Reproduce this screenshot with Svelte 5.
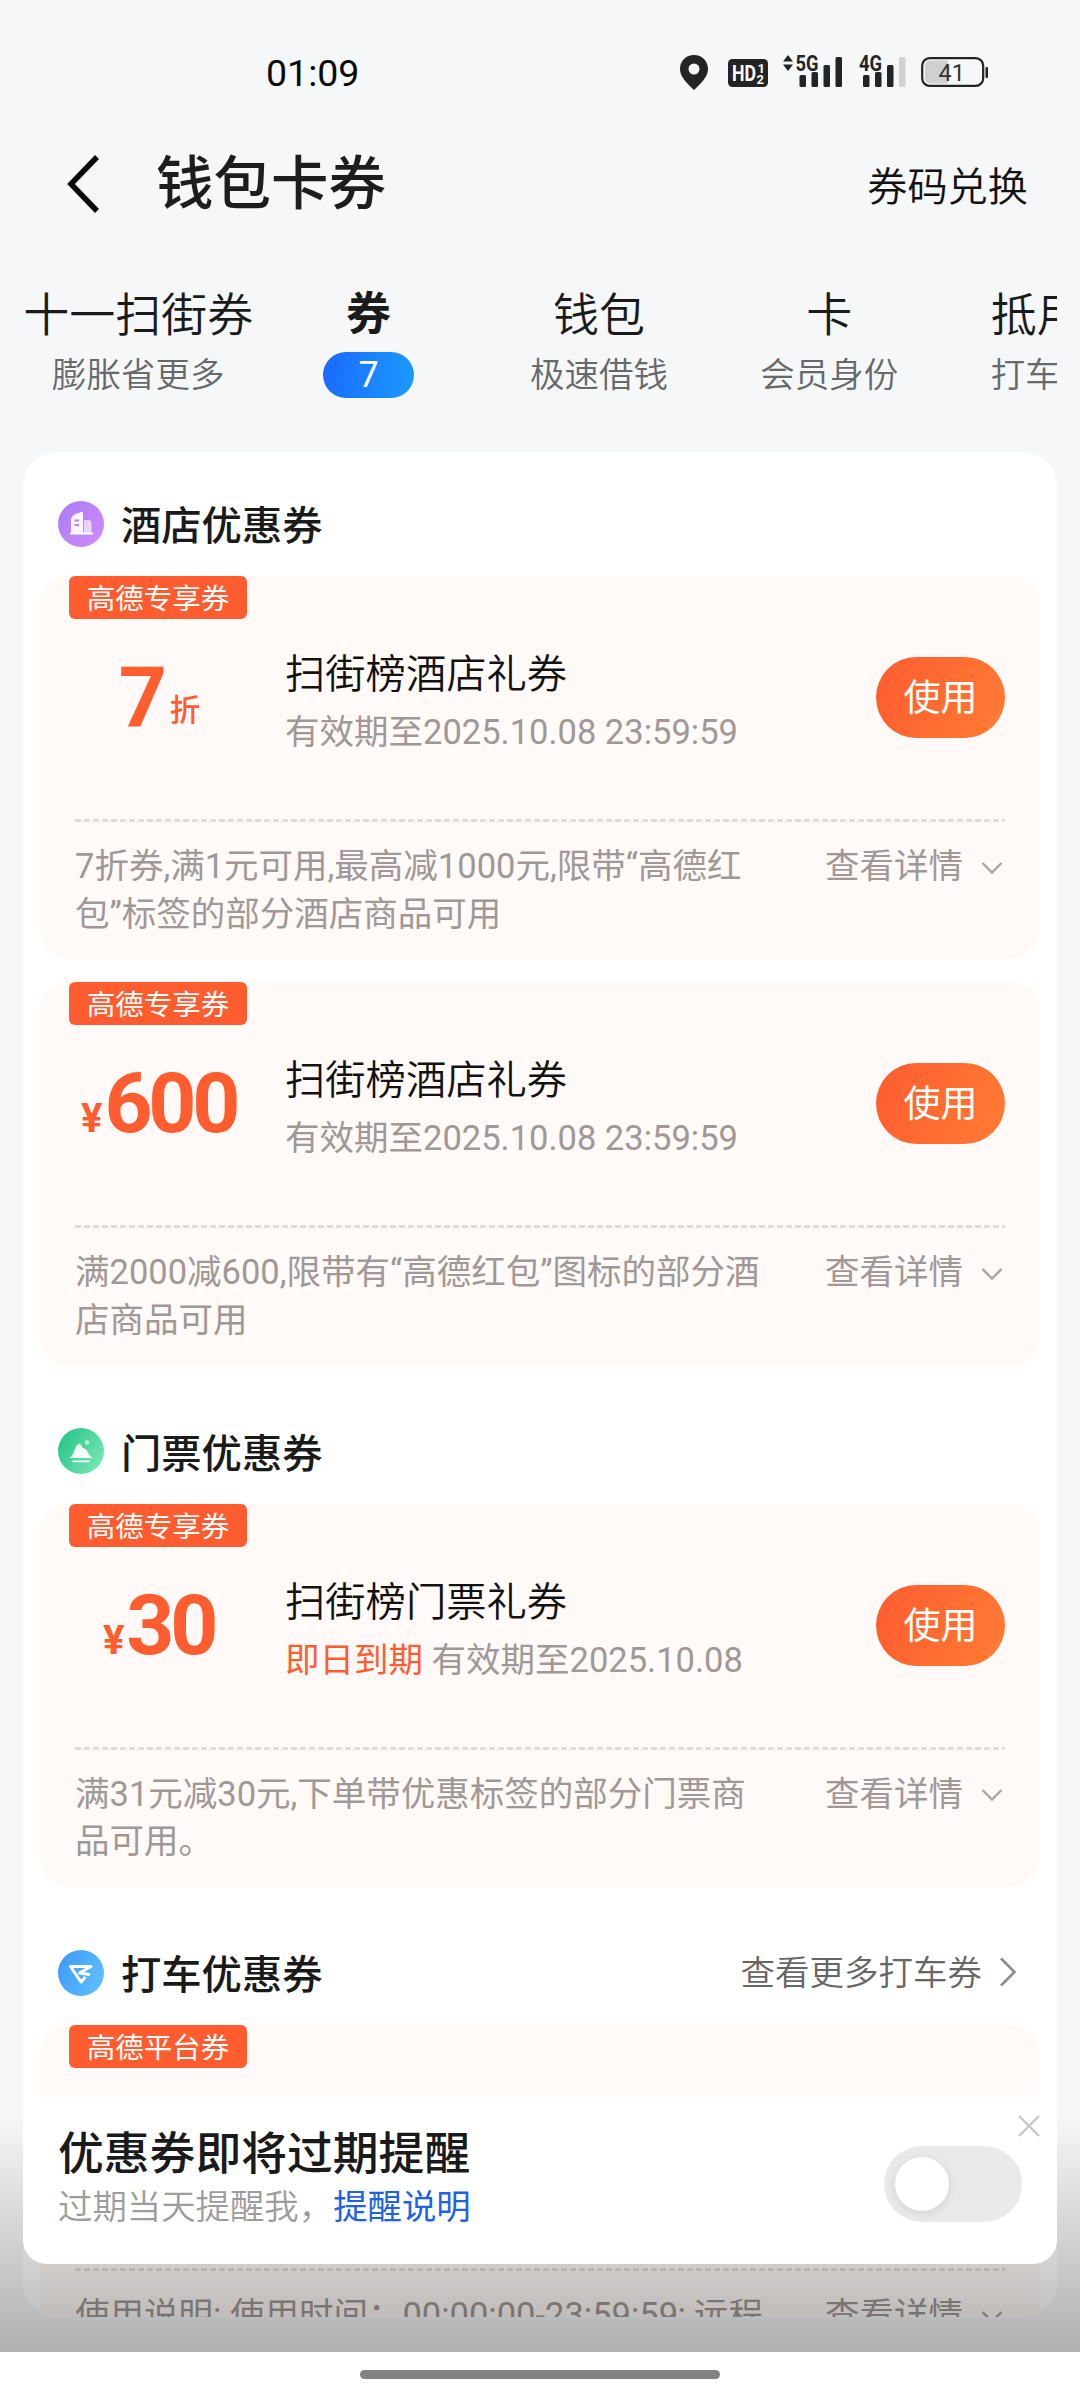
<script>
    const tabs = [
        { label: '十一扫街券', sub: '膨胀省更多' },
        { label: '券', count: 7 },
        { label: '钱包', sub: '极速借钱' },
        { label: '卡', sub: '会员身份' },
        { label: '抵用券', sub: '打车可用' }
    ];
    let active = $state(1);
    let remind = $state(false);

    const sections = [
        {
            icon: 'hotel',
            title: '酒店优惠券',
            coupons: [
                {
                    tag: '高德专享券',
                    amount: '7',
                    unit: '折',
                    name: '扫街榜酒店礼券',
                    valid: '有效期至2025.10.08 23:59:59',
                    desc: ['7折券,满1元可用,最高减1000元,限带“高德红', '包”标签的部分酒店商品可用']
                },
                {
                    tag: '高德专享券',
                    prefix: '¥',
                    amount: '600',
                    name: '扫街榜酒店礼券',
                    valid: '有效期至2025.10.08 23:59:59',
                    desc: ['满2000减600,限带有“高德红包”图标的部分酒', '店商品可用']
                }
            ]
        },
        {
            icon: 'ticket',
            title: '门票优惠券',
            coupons: [
                {
                    tag: '高德专享券',
                    prefix: '¥',
                    amount: '30',
                    name: '扫街榜门票礼券',
                    urgent: '即日到期',
                    valid: '有效期至2025.10.08',
                    desc: ['满31元减30元,下单带优惠标签的部分门票商', '品可用。']
                }
            ]
        },
        {
            icon: 'taxi',
            title: '打车优惠券',
            more: '查看更多打车券',
            coupons: [
                {
                    tag: '高德平台券',
                    desc: ['使用说明: 使用时间：00:00:00-23:59:59; 远程']
                }
            ]
        }
    ];
</script>

<div class="screen">
    <div class="status-bar">
        <span class="clock">01:09</span>
        <div class="status-icons">
            <svg class="pin" width="28" height="35" viewBox="0 0 28 35">
                <path fill-rule="evenodd" fill="#222425" d="M14 0C6 0 0 6 0 14c0 8 7 14 14 21 7-7 14-13 14-21C28 6 22 0 14 0zm0 8.500a5.500 5.500 0 1 1 0 11 5.500 5.500 0 0 1 0-11z" />
            </svg>
            <svg class="hd" width="40" height="28" viewBox="0 0 40 28">
                <rect width="40" height="28" rx="4.500" fill="#222425" />
                <text x="4" y="22" font-size="22" font-weight="700" textLength="24" lengthAdjust="spacingAndGlyphs">HD</text>
                <text x="29.500" y="13.500" font-size="13" font-weight="700">1</text>
                <text x="28.500" y="25" font-size="13" font-weight="700">2</text>
            </svg>
            <svg class="signal" width="60" height="33" viewBox="0 0 60 33" fill="#222425">
                <path d="M0 6.500 5 0l5 6.500zM0 9.500h10L5 16z" />
                <text x="12.500" y="15.500" font-size="21.500" font-weight="700" textLength="23" lengthAdjust="spacingAndGlyphs">5G</text>
                <rect x="16.500" y="20" width="6.500" height="12" rx="1.500" />
                <rect x="28.500" y="17" width="6.500" height="15" rx="1.500" />
                <rect x="40.500" y="10" width="6.500" height="22" rx="1.500" />
                <rect x="52.500" y="2" width="6.500" height="30" rx="1.500" />
            </svg>
            <svg class="signal second" width="47" height="33" viewBox="0 0 47 33" fill="#222425">
                <text x="0" y="15.500" font-size="21.500" font-weight="700" textLength="23" lengthAdjust="spacingAndGlyphs">4G</text>
                <rect x="4" y="20" width="6.500" height="12" rx="1.500" />
                <rect x="16" y="17" width="6.500" height="15" rx="1.500" />
                <rect x="28" y="10" width="6.500" height="22" rx="1.500" />
                <rect x="40" y="2" width="6.500" height="30" rx="1.500" fill="#cfd1d2" />
            </svg>
            <svg class="battery" width="67" height="30" viewBox="0 0 67 30">
                <path d="M9 3.500h18v23H9a5 5 0 0 1-5-5v-13a5 5 0 0 1 5-5z" fill="#cfd0d1" />
                <rect x="1.200" y="1.200" width="61" height="27.600" rx="7.500" fill="none" stroke="#222425" stroke-width="2.200" />
                <rect x="64.500" y="10" width="2.500" height="11" rx="1" fill="#222425" />
                <text class="level" x="17.500" y="24" font-size="23.500">41</text>
            </svg>
        </div>
    </div>

    <header class="nav">
        <svg class="back" width="34" height="60" viewBox="0 0 34 60" fill="none">
            <path d="M31 3 5 30l26 27" stroke="#0a0a0a" stroke-width="5.500" />
        </svg>
        <h1>钱包卡券</h1>
        <span class="redeem">券码兑换</span>
    </header>

    <nav class="tabs">
        {#each tabs as tab, i}
            <button class="tab" class:active={i === active} onclick={() => (active = i)}>
                <span class="tab-label">{tab.label}</span>
                {#if tab.count}
                    <span class="tab-count">{tab.count}</span>
                {:else}
                    <span class="tab-sub">{tab.sub}</span>
                {/if}
            </button>
        {/each}
    </nav>

    <main class="panel">
        {#each sections as section}
            <section>
                <div class="section-head">
                    {#if section.icon === 'hotel'}
                        <svg width="46" height="46" viewBox="0 0 46 46">
                            <defs>
                                <linearGradient id="g-hotel" x1="0" y1="0" x2="1" y2="1">
                                    <stop offset="0" stop-color="#a97bf5" />
                                    <stop offset="1" stop-color="#cf8dfb" />
                                </linearGradient>
                            </defs>
                            <circle cx="23" cy="23" r="23" fill="url(#g-hotel)" />
                            <path d="M26 19h4.500a3 3 0 0 1 3 3v10H26z" fill="#fff" opacity=".65" />
                            <path d="M13 32V19c0-4 5-7.500 12-8V32z" fill="#fff" opacity=".92" />
                            <path d="M16.500 19.500h4.500M16.500 24h4.500" stroke="#b682f7" stroke-width="1.800" />
                            <path d="M12 32.500h23" stroke="#fff" stroke-width="2" />
                        </svg>
                    {:else if section.icon === 'ticket'}
                        <svg width="46" height="46" viewBox="0 0 46 46">
                            <defs>
                                <linearGradient id="g-ticket" x1="0" y1="0" x2="1" y2="0.600">
                                    <stop offset="0" stop-color="#1fc184" />
                                    <stop offset="1" stop-color="#72e5b0" />
                                </linearGradient>
                            </defs>
                            <circle cx="23" cy="23" r="23" fill="url(#g-ticket)" />
                            <path d="M11 30c3-1 4.500-4.500 6-9 1-3 2-5 4-5s2.500 2 4 4l2 1c3 1 3.500 7.500 8 9z" fill="#fff" opacity=".92" />
                            <circle cx="29" cy="14.500" r="2.200" fill="#fff" opacity=".7" />
                            <path d="M15 33.300h16" stroke="#fff" stroke-width="1.800" stroke-linecap="round" />
                        </svg>
                    {:else}
                        <svg width="46" height="46" viewBox="0 0 46 46">
                            <defs>
                                <linearGradient id="g-taxi" x1="0" y1="0" x2="1" y2="0.500">
                                    <stop offset="0" stop-color="#3b97fa" />
                                    <stop offset="1" stop-color="#5cbcff" />
                                </linearGradient>
                            </defs>
                            <circle cx="23" cy="23" r="23" fill="url(#g-taxi)" />
                            <path d="m27.500 27-4.500 5-10.500-15.500H33L21.500 23l10.500 1.500" fill="none" stroke="#fff" stroke-width="3" stroke-linejoin="round" />
                        </svg>
                    {/if}
                    <h2>{section.title}</h2>
                    {#if section.more}
                        <span class="more">
                            {section.more}
                            <svg width="18" height="30" viewBox="0 0 18 30" fill="none">
                                <path d="m2 1.500 13.500 13.500L2 28.500" stroke="#8c8c8c" stroke-width="2.600" />
                            </svg>
                        </span>
                    {/if}
                </div>

                <div class="coupons">
                    {#each section.coupons as c}
                        <article class="coupon">
                            <span class="tag">{c.tag}</span>
                            <div class="coupon-main">
                                {#if c.name}
                                    <div class="amount">
                                        {#if c.prefix}<span class="prefix">{c.prefix}</span>{/if}
                                        <span class="value">{c.amount}</span>
                                        {#if c.unit}<span class="unit">{c.unit}</span>{/if}
                                    </div>
                                    <div class="info">
                                        <h3>{c.name}</h3>
                                        <p class="valid">
                                            {#if c.urgent}<span class="urgent">{c.urgent}</span>{/if}
                                            {c.valid}
                                        </p>
                                    </div>
                                    <button class="use">使用</button>
                                {/if}
                            </div>
                            <div class="dashes"></div>
                            <div class="coupon-foot">
                                <p class="desc">
                                    {#each c.desc as line}
                                        <span>{line}</span>
                                    {/each}
                                </p>
                                <span class="detail">
                                    查看详情
                                    <svg width="22" height="14" viewBox="0 0 22 14" fill="none">
                                        <path d="m1.500 2 9.500 9.500L20.500 2" stroke="#aaa4a3" stroke-width="2.400" />
                                    </svg>
                                </span>
                            </div>
                        </article>
                    {/each}
                </div>
            </section>
        {/each}
    </main>

    <!-- floating expiry reminder -->
    <div class="shade"></div>
    <div class="reminder">
        <div class="reminder-text">
            <h4>优惠券即将过期提醒</h4>
            <p>过期当天提醒我，<span class="link">提醒说明</span></p>
        </div>
        <button class="toggle" class:on={remind} aria-label="提醒" onclick={() => (remind = !remind)}>
            <span class="knob"></span>
        </button>
        <svg class="close" width="24" height="24" viewBox="0 0 24 24">
            <path d="m2 2 20 20M22 2 2 22" stroke="#c8c8c8" stroke-width="2.400" />
        </svg>
    </div>

    <div class="home-bar"><span></span></div>
</div>

<style>
    :global(body) {
        margin: 0;
        background: #f5f7f9;
    }

    .screen {
        position: relative;
        width: 1080px;
        height: 2400px;
        overflow: hidden;
        background: #f5f7f9;
        font-family: Roboto, 'Noto Sans CJK SC', sans-serif;
        color: #1a1a1a;
    }

    h1, h2, h3, h4, p {
        margin: 0;
        font-weight: 400;
    }

    button {
        border: 0;
        padding: 0;
        background: none;
        font-family: inherit;
        color: inherit;
    }

    svg {
        display: block;
        flex-shrink: 0;
        overflow: visible;
    }

    /* status bar */
    .status-bar {
        display: flex;
        justify-content: space-between;
        height: 130px;
        padding: 55px 92px 0 266px;
        box-sizing: border-box;
    }

    .clock {
        margin-top: -4px;
        font-size: 37.500px;
        font-weight: 450;
        line-height: 44px;
        color: #0a0a0a;
    }

    .status-icons {
        display: flex;
        align-items: flex-start;
    }

    .hd {
        margin: 4px 15px 0 20px;
        fill: #fff;
    }

    .second {
        margin: 0 15px 0 16px;
    }

    .battery {
        margin-top: 2px;
    }

    .level {
        fill: #333;
    }

    /* nav */
    .nav {
        display: flex;
        align-items: center;
        height: 108px;
        padding: 0 52px 0 66px;
    }

    .nav h1 {
        margin: 2px 0 0 56px;
        font-size: 57.500px;
        font-weight: 500;
        line-height: 80px;
        color: #1c1d1f;
    }

    .redeem {
        margin: 7px 0 0 auto;
        font-size: 40.200px;
        line-height: 60px;
        color: #111;
        font-weight: 350;
    }

    /* tabs */
    .tabs {
        display: flex;
        height: 176px;
        margin: 38px 23px 0;
        overflow: hidden;
    }

    .tab {
        display: flex;
        flex: 0 0 230.400px;
        flex-direction: column;
        align-items: center;
        white-space: nowrap;
    }

    .tab-label {
        margin-top: 9px;
        font-size: 46px;
        font-weight: 350;
        line-height: 60px;
    }

    .tab.active .tab-label {
        font-weight: 700;
        font-size: 45px;
    }

    .tab-sub {
        margin-top: 7px;
        font-size: 34.500px;
        font-weight: 350;
        line-height: 46px;
        color: #66686a;
    }

    .tab-count {
        width: 91px;
        margin-top: 7px;
        border-radius: 23px;
        background: linear-gradient(100deg, #1b68ff, #1a9bff);
        font-size: 36px;
        line-height: 46px;
        text-align: center;
        color: #fff;
    }

    /* coupon list */
    .panel {
        height: 1865px;
        margin: 0 23px;
        overflow: hidden;
        border-radius: 34px;
        background: #fff;
        box-sizing: border-box;
    }

    .section-head {
        display: flex;
        align-items: center;
        height: 76px;
        padding: 62px 40px 0 35px;
    }

    section:first-child .section-head {
        padding-top: 48px;
    }

    .section-head svg {
        margin-top: -29px;
    }

    .section-head h2 {
        margin: -22px 0 0 17px;
        font-size: 40.300px;
        font-weight: 500;
        line-height: 60px;
    }

    .more {
        display: flex;
        align-items: center;
        margin: -28px 0 0 auto;
        font-size: 34.500px;
        font-weight: 350;
        line-height: 50px;
        color: #666;
    }

    .more svg {
        margin: -2px 0 0 17px;
    }

    .coupons {
        display: flex;
        flex-direction: column;
        gap: 23px;
        padding: 0 17px;
    }

    .coupon {
        height: 383.400px;
        border-radius: 28px;
        background: #fff9f7;
    }

    .tag {
        display: block;
        width: 178px;
        height: 43px;
        margin-left: 29px;
        border-radius: 6px;
        background: #ff5c30;
        font-size: 28.500px;
        line-height: 47px;
        text-align: center;
        color: #fff;
    }

    .coupon-main {
        display: flex;
        height: 200px;
        padding-right: 35px;
    }

    .amount {
        display: flex;
        align-items: baseline;
        justify-content: center;
        width: 237px;
        height: 100px;
        margin-top: 29px;
        font-weight: 700;
        line-height: 100px;
        color: #ff5c30;
    }

    .value {
        margin-left: 2px;
        font-size: 84px;
        letter-spacing: -4.300px;
    }

    .prefix {
        font-size: 40px;
    }

    .unit {
        position: relative;
        top: -5px;
        margin-left: 7px;
        font-size: 30.500px;
        font-weight: 500;
    }

    .info {
        flex: 1;
        padding: 26px 0 0 8px;
    }

    .info h3 {
        font-size: 40.300px;
        font-weight: 350;
        line-height: 60px;
        color: #111;
    }

    .valid {
        font-size: 34.500px;
        line-height: 54px;
        color: #9f9896;
    }

    .urgent {
        color: #ff5c30;
    }

    .use {
        width: 129px;
        height: 81px;
        margin-top: 38px;
        border-radius: 41px;
        background: linear-gradient(110deg, #ff5c30, #ff7c34);
        font-size: 37px;
        line-height: 83px;
        color: #fff;
    }

    .dashes {
        height: 3px;
        margin: 0 35px;
        background: repeating-linear-gradient(90deg, #e2dbda 0 6px, transparent 6px 9px);
    }

    .coupon-foot {
        display: flex;
        justify-content: space-between;
        padding: 21px 35px 0;
        font-size: 34.500px;
        line-height: 47.500px;
        color: #9f9896;
    }

    .desc span {
        display: block;
        white-space: nowrap;
    }

    .detail {
        display: flex;
        align-items: center;
        height: 47px;
    }

    .detail svg {
        margin: 2px 2px 0 18px;
    }

    /* floating reminder */
    .shade {
        position: absolute;
        left: 0;
        right: 0;
        top: 2115px;
        height: 237px;
        background: linear-gradient(rgba(0, 0, 0, 0), rgba(0, 0, 0, 0.285));
    }

    .reminder {
        position: absolute;
        left: 23px;
        top: 2097px;
        display: flex;
        justify-content: space-between;
        width: 1034px;
        height: 167px;
        padding: 0 35px;
        border-radius: 24px;
        background: #fff;
        box-sizing: border-box;
    }

    .reminder h4 {
        margin-top: 28px;
        font-size: 45.800px;
        font-weight: 500;
        line-height: 60px;
    }

    .reminder p {
        margin-top: -1px;
        font-size: 34.400px;
        font-weight: 350;
        line-height: 46px;
        color: #9c9c9c;
    }

    .reminder .link {
        font-weight: 400;
        color: #1f62e8;
    }

    .toggle {
        display: flex;
        width: 138px;
        height: 76px;
        margin-top: 49px;
        padding: 11px;
        border-radius: 38px;
        background: #e9e9e9;
        box-sizing: border-box;
    }

    .toggle.on {
        justify-content: flex-end;
        background: #1a7cff;
    }

    .knob {
        width: 54px;
        height: 54px;
        border-radius: 50%;
        background: #fff;
        box-shadow: 0 2px 8px rgba(0, 0, 0, 0.1);
    }

    .close {
        position: absolute;
        top: 17px;
        right: 16px;
    }

    .home-bar {
        position: absolute;
        left: 0;
        right: 0;
        bottom: 0;
        display: flex;
        justify-content: center;
        height: 48px;
        padding-top: 18px;
        background: #fff;
        box-sizing: border-box;
    }

    .home-bar span {
        width: 360px;
        height: 9px;
        border-radius: 5px;
        background: #828282;
    }
</style>
